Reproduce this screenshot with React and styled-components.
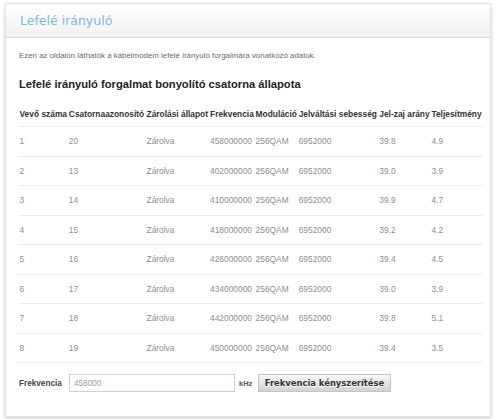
import React from "react";
import styled, { createGlobalStyle } from "styled-components";

const GlobalStyle = createGlobalStyle`
  body {
    margin: 0;
    background: #ffffff;
    font-family: "Liberation Sans", Arial, sans-serif;
  }
`;

const Panel = styled.div`
  margin: 3px 9px 6px 5px;
  border: 1px solid #e2e2e2;
  box-shadow: 0 2px 4px rgba(0, 0, 0, 0.18);
  background: #fff;
`;

const Header = styled.div`
  height: 33px;
  display: flex;
  align-items: center;
  padding-left: 14px;
  background: linear-gradient(to bottom, #ffffff, #f1f1f1);
  border-bottom: 1px solid #dcdcdc;
`;

const Title = styled.h2`
  margin: 0;
  font-family: "DejaVu Sans", sans-serif;
  font-size: 12.5px;
  font-weight: normal;
  color: #7dbadf;
`;

const Body = styled.div`
  padding: 13px 7px 24px 13px;
`;

const Intro = styled.p`
  margin: 0;
  font-size: 7.9px;
  color: #6a6a6a;
`;

const Heading = styled.h3`
  margin: 18px 0 0;
  font-size: 11.2px;
  font-weight: bold;
  color: #222;
`;

const Table = styled.table`
  width: 100%;
  margin-top: 11px;
  border-collapse: collapse;
`;

const Th = styled.th`
  text-align: left;
  font-size: 8.4px;
  font-weight: bold;
  color: #333;
  white-space: nowrap;
  padding: 0 0.5px;
  height: 25px;
  border-bottom: 1px solid #ececec;
`;

const Td = styled.td`
  font-size: 8.4px;
  color: #8e8e8e;
  white-space: nowrap;
  padding: 0 0.5px;
  height: 28.5px;
  border-bottom: 1px solid #ececec;
`;

const Form = styled.div`
  display: flex;
  align-items: center;
  margin-top: 11px;
`;

const Label = styled.span`
  font-size: 8.2px;
  font-weight: bold;
  color: #444;
  width: 50px;
`;

const Input = styled.input`
  width: 156px;
  height: 16px;
  padding: 0 4px;
  border: 1px solid #cfcfcf;
  font-family: inherit;
  font-size: 8.2px;
  color: #999;
  outline: none;
`;

const Unit = styled.span`
  font-size: 7.5px;
  font-weight: bold;
  color: #555;
  margin-left: 4px;
  width: 19px;
`;

const Button = styled.button`
  height: 18px;
  width: 133px;
  padding: 0;
  border: 1px solid #c4c4c4;
  background: linear-gradient(to bottom, #f8f8f8, #d2d2d2);
  font-family: "DejaVu Sans", sans-serif;
  font-size: 8.4px;
  font-weight: bold;
  color: #333;
  text-shadow: 0 1px 0 #fff;
`;

const columns = [
  "Vevő száma",
  "Csatornaazonosító",
  "Zárolási állapot",
  "Frekvencia",
  "Moduláció",
  "Jelváltási sebesség",
  "Jel-zaj arány",
  "Teljesítmény"
];

const rows = [
  [1, 20, "458000000", "39.8", "4.9"],
  [2, 13, "402000000", "39.0", "3.9"],
  [3, 14, "410000000", "39.9", "4.7"],
  [4, 15, "418000000", "39.2", "4.2"],
  [5, 16, "426000000", "39.4", "4.5"],
  [6, 17, "434000000", "39.0", "3.9"],
  [7, 18, "442000000", "39.8", "5.1"],
  [8, 19, "450000000", "39.4", "3.5"]
];

const App = () => (
  <>
    <GlobalStyle />
    <Panel>
      <Header>
        <Title>Lefelé irányuló</Title>
      </Header>
      <Body>
        <Intro>
          Ezen az oldalon láthatók a kábelmodem lefelé irányuló forgalmára vonatkozó adatok.
        </Intro>
        <Heading>Lefelé irányuló forgalmat bonyolító csatorna állapota</Heading>
        <Table>
          <thead>
            <tr>
              {columns.map(col => (
                <Th key={col}>{col}</Th>
              ))}
            </tr>
          </thead>
          <tbody>
            {rows.map(([num, id, freq, snr, power]) => (
              <tr key={num}>
                <Td>{num}</Td>
                <Td>{id}</Td>
                <Td>Zárolva</Td>
                <Td>{freq}</Td>
                <Td>256QAM</Td>
                <Td>6952000</Td>
                <Td>{snr}</Td>
                <Td>{power}</Td>
              </tr>
            ))}
          </tbody>
        </Table>
        <Form>
          <Label>Frekvencia</Label>
          <Input defaultValue="458000" />
          <Unit>kHz</Unit>
          <Button>Frekvencia kényszerítése</Button>
        </Form>
      </Body>
    </Panel>
  </>
);

export default App;
